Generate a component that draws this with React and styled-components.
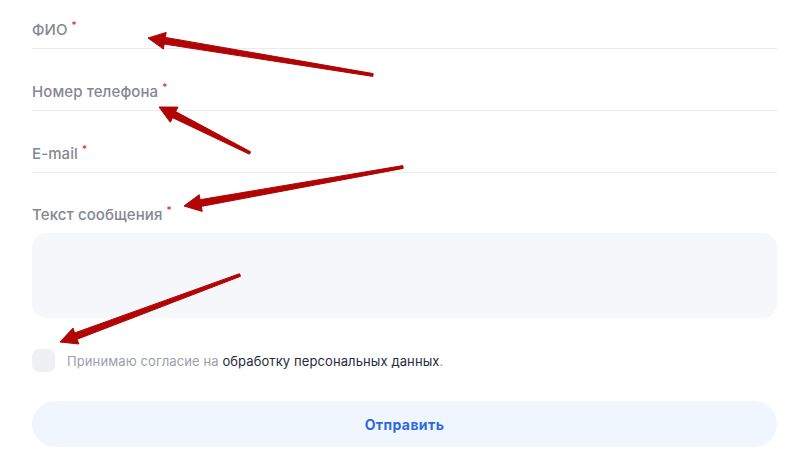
import React from "react";
import styled, { createGlobalStyle } from "styled-components";

const GlobalStyle = createGlobalStyle`
  html, body {
    margin: 0;
    padding: 0;
    background: #ffffff;
  }
  body {
    font-family: Inter, "Noto Sans", sans-serif;
  }
`;

const Page = styled.div`
  position: relative;
  width: 800px;
  height: 473px;
  overflow: hidden;
`;

const Form = styled.form`
  display: flex;
  flex-direction: column;
  padding: 0 23px 0 32px;
`;

const Field = styled.div`
  padding: 28px 0 13px;
  border-bottom: 1px solid #e9ebf1;

  &:first-child {
    padding-top: 15px;
  }
`;

const Label = styled.label`
  display: block;
  height: 20px;
  line-height: 20px;
  font-size: 15px;
  font-weight: 500;
  letter-spacing: 0.1px;
  color: #838893;
  margin: ${(p) => (p.$standalone ? "27px 0 13px" : "0")};
`;

const Required = styled.span`
  color: #e1283f;
  font-size: 10px;
  vertical-align: 6px;
  margin-left: 4px;
`;

const TextArea = styled.div`
  height: 85px;
  border-radius: 14px;
  background: #f6f7fb;
`;

const ConsentRow = styled.div`
  display: flex;
  align-items: center;
  gap: 12px;
  margin-top: 31px;
`;

const CheckBox = styled.span`
  width: 23px;
  height: 23px;
  border-radius: 7px;
  background: #eef0f4;
  flex-shrink: 0;
`;

const ConsentText = styled.span`
  font-size: 13px;
  letter-spacing: 0.1px;
  color: #9ba0ab;
`;

const ConsentLink = styled.a`
  color: #272c3d;
  text-decoration: none;
`;

const SubmitButton = styled.button`
  margin-top: 29px;
  height: 46px;
  border: none;
  border-radius: 23px;
  background: #f0f6fe;
  color: #2d6ae0;
  font-family: Inter, "Noto Sans", sans-serif;
  font-size: 14px;
  font-weight: 700;
  letter-spacing: 0.4px;
  cursor: pointer;
`;

const Overlay = styled.svg`
  position: absolute;
  left: 0;
  top: 0;
  pointer-events: none;
`;

const arrows = [
  { tip: [148, 38], tail: [373, 75] },
  { tip: [159, 107], tail: [250, 153] },
  { tip: [184, 206], tail: [403, 167] },
  { tip: [60, 342], tail: [240, 275] },
];

// tapered arrow: thin at the tail, wider at the head
const arrowPoints = ({ tip, tail }) => {
  const [tx, ty] = tip;
  const [sx, sy] = tail;
  const len = Math.hypot(tx - sx, ty - sy);
  const ux = (tx - sx) / len;
  const uy = (ty - sy) / len;
  const nx = -uy;
  const ny = ux;
  const headLen = 17;
  const headHalf = 8.5;
  const tailHalf = 1.4;
  const neckHalf = 3.4;
  const bx = tx - ux * headLen;
  const by = ty - uy * headLen;
  const pts = [
    [sx + nx * tailHalf, sy + ny * tailHalf],
    [bx + nx * neckHalf, by + ny * neckHalf],
    [bx + nx * headHalf, by + ny * headHalf],
    [tx, ty],
    [bx - nx * headHalf, by - ny * headHalf],
    [bx - nx * neckHalf, by - ny * neckHalf],
    [sx - nx * tailHalf, sy - ny * tailHalf],
  ];
  return pts.map((p) => p.map((v) => v.toFixed(1)).join(",")).join(" ");
};

const fields = ["ФИО", "Номер телефона", "E-mail"];

export default function App() {
  return (
    <Page>
      <GlobalStyle />
      <Form onSubmit={(e) => e.preventDefault()}>
        {fields.map((name) => (
          <Field key={name}>
            <Label>
              {name}
              <Required>*</Required>
            </Label>
          </Field>
        ))}
        <Label $standalone>
          Текст сообщения
          <Required>*</Required>
        </Label>
        <TextArea />
        <ConsentRow>
          <CheckBox />
          <ConsentText>
            Принимаю согласие на{" "}
            <ConsentLink href="#">обработку персональных данных</ConsentLink>.
          </ConsentText>
        </ConsentRow>
        <SubmitButton type="submit">Отправить</SubmitButton>
      </Form>
      <Overlay width="800" height="473" viewBox="0 0 800 473">
        {arrows.map((a, i) => (
          <polygon
            key={i}
            points={arrowPoints(a)}
            fill="#b10404"
            stroke="#b10404"
            strokeWidth="1"
            strokeLinejoin="round"
          />
        ))}
      </Overlay>
    </Page>
  );
}
